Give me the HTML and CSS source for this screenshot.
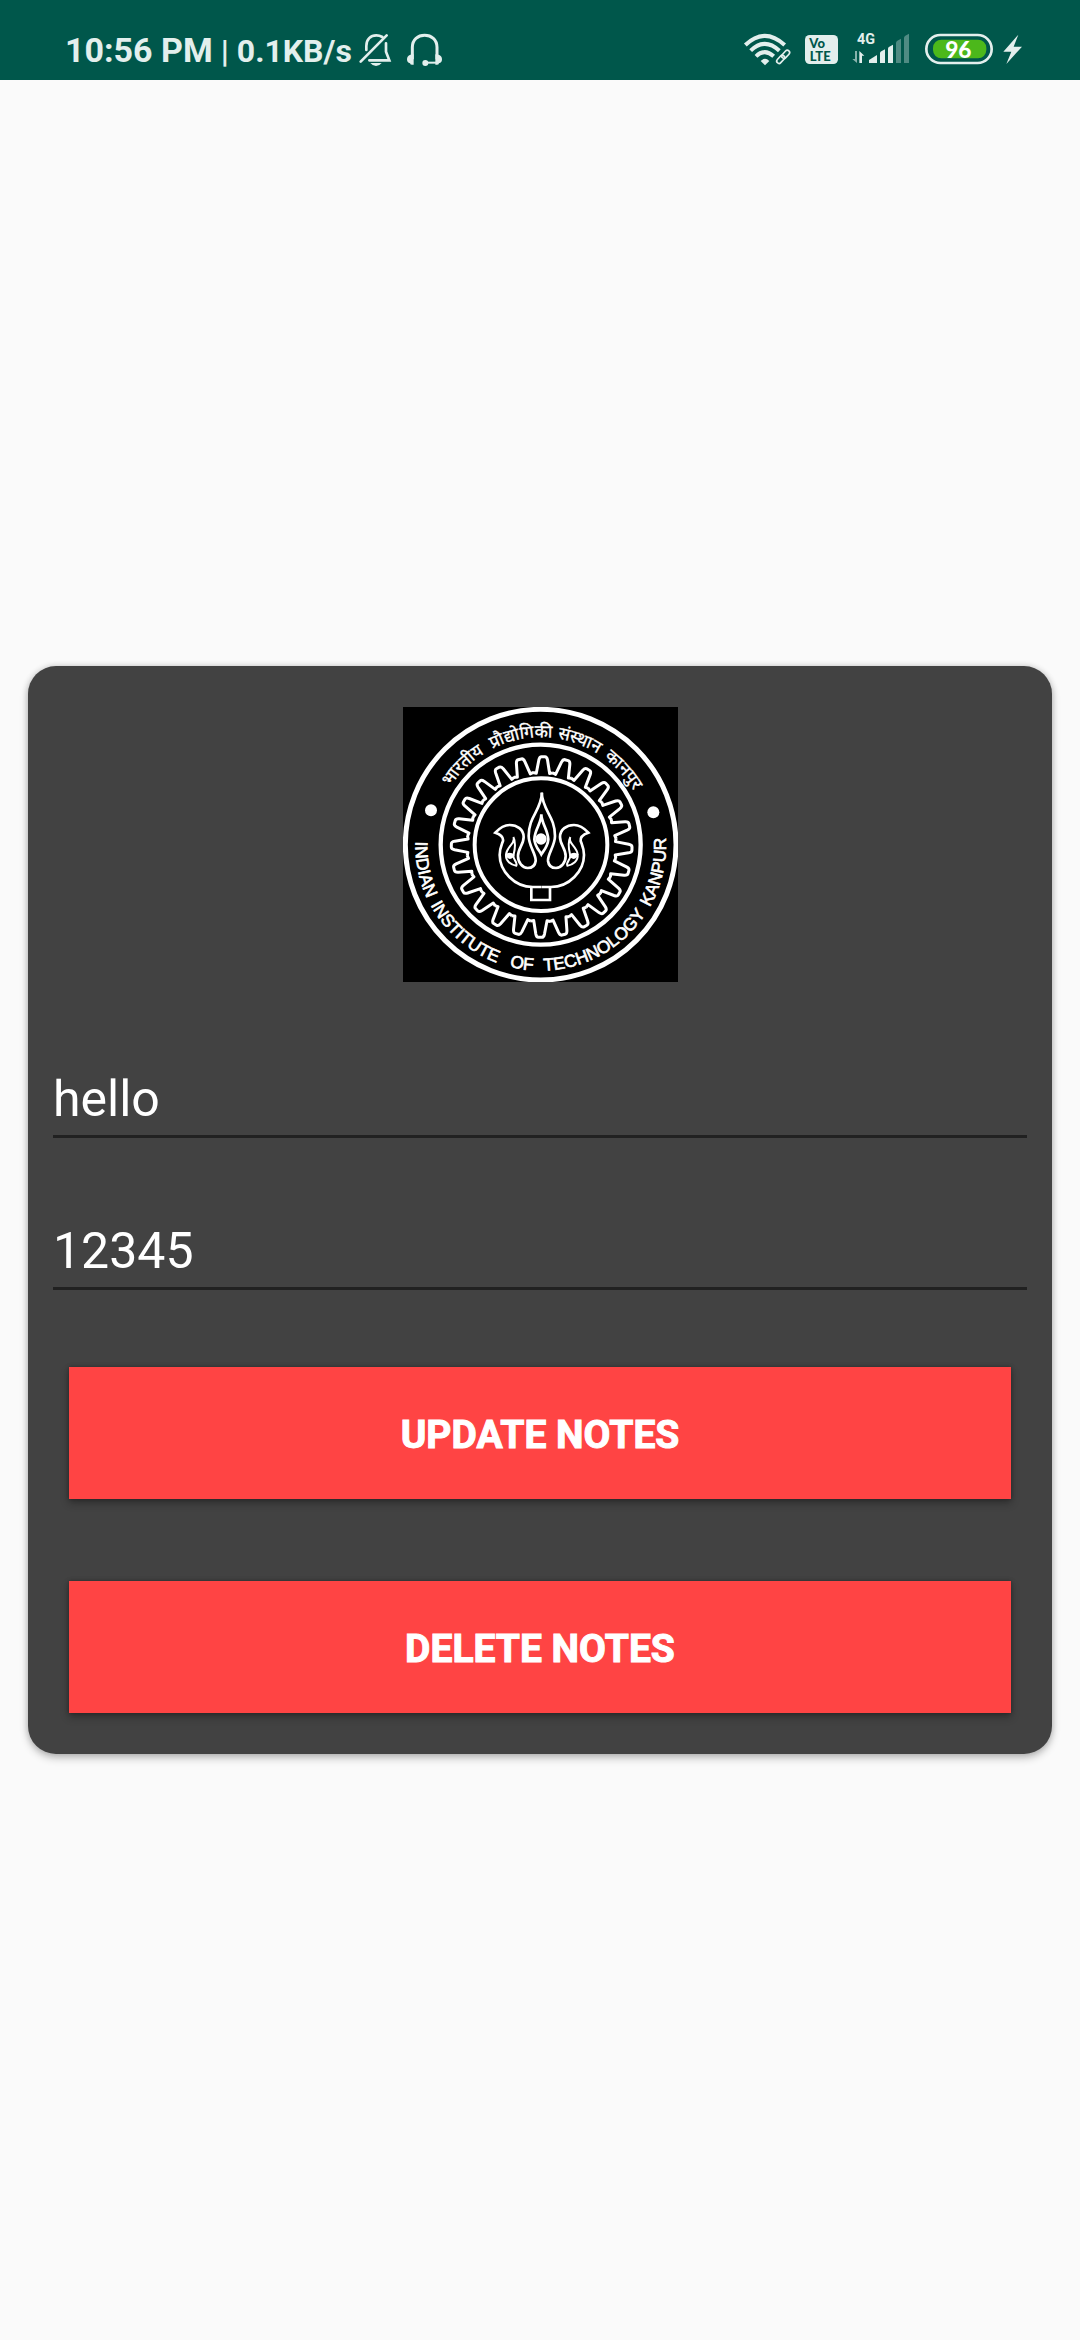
FILE: index.html
```html
<!DOCTYPE html>
<html lang="en">
<head>
<meta charset="utf-8">
<meta name="viewport" content="width=device-width, initial-scale=1">
<title>Update notes</title>
<link rel="stylesheet" href="styles.css">
</head>
<body>
<header class="status">
  <div class="status-left">
    <span class="clock">10:56 PM</span>
    <span class="speed">| 0.1KB/s</span>
    <svg class="icon-bell" viewBox="954 0 105 240" aria-hidden="true">
      <g fill="none" stroke="currentColor" stroke-width="8" stroke-linecap="round">
        <path d="M962 185 L1040 106"/>
        <path d="M979 150 V138 C979 118 992 106 1009 106 C1017 106 1022 108 1027 111"/>
        <path d="M1038 130 V155 L1048 181 H988"/>
      </g>
      <path fill="currentColor" d="M991 189 H1025 Q1018 198 1008 198 Q998 198 991 189Z"/>
    </svg>
    <svg class="icon-headset" viewBox="1098 0 111 240" aria-hidden="true">
      <path d="M1117 178 V142 C1117 118 1134 106 1154 106 C1174 106 1191 118 1191 142 V178" fill="none" stroke="currentColor" stroke-width="9"/>
      <path d="M1121 163 V194 Q1111 196 1110 190 Q1101 188 1101 178 Q1101 167 1111 164ZM1186 163 V194 Q1196 196 1197 190 Q1206 188 1206 178 Q1206 167 1196 164Z" fill="currentColor"/>
      <circle cx="1156" cy="189" r="9" fill="currentColor"/>
      <path d="M1156 188 H1194" stroke="currentColor" stroke-width="6"/>
    </svg>
  </div>
  <div class="status-right">
    <svg class="icon-wifi" viewBox="69 0 159 240" aria-hidden="true">
      <g fill="none" stroke="currentColor" stroke-width="12">
        <path d="M76 135 Q134 80 194 135"/>
        <path d="M92 152 Q134 111 178 152"/>
        <path d="M108 169 Q134 144 161 169"/>
      </g>
      <path fill="currentColor" d="M122 183 Q135 170 148 183 L135 196Z"/>
      <g fill="none" stroke="currentColor" stroke-width="5">
        <rect x="-14" y="-7" width="28" height="14" rx="7" transform="translate(197 163) rotate(-47)"/>
        <rect x="-14" y="-7" width="28" height="14" rx="7" transform="translate(182 178) rotate(-47)"/>
      </g>
    </svg>
    <svg class="icon-volte" viewBox="252 0 117 240" role="img" aria-label="VoLTE">
      <rect x="255" y="105" width="99" height="87" rx="14" fill="currentColor"/>
      <text class="volte" x="268" y="143">Vo</text>
      <text class="volte" x="269" y="182">LTE</text>
    </svg>
    <svg class="icon-signal" viewBox="393 0 192 240" role="img" aria-label="4G signal">
      <text class="network" x="411" y="131">4G</text>
      <g fill="currentColor">
        <path opacity=".6" d="M405 153 H411 V189 L397 177 H405Z"/>
        <path d="M418 189 V153 L433 167 H426 V189Z"/>
        <path d="M447 189 V180 L471 165 V189Z"/>
        <path d="M480 189 V160 Q480 156 484 154 L495 148 V189Z"/>
        <path d="M504 189 V146 Q504 142 508 140 L519 134 V189Z"/>
        <path opacity=".35" d="M528 189 V129 Q528 125 532 122 L543 116 V189ZM552 189 V114 Q552 110 556 107 L567 101 V189Z"/>
      </g>
    </svg>
    <svg class="icon-battery" viewBox="609 0 213 240" role="img" aria-label="Battery 96%">
      <rect x="619" y="105" width="196" height="84" rx="42" fill="none" stroke="currentColor" stroke-width="8"/>
      <rect x="639" y="119" width="160" height="56" rx="25" fill="#4cb81b"/>
      <text class="charge" x="715" y="173">96</text>
    </svg>
    <svg class="icon-bolt" viewBox="846 0 69 240" aria-hidden="true">
      <path fill="currentColor" d="M895 104 L850 155 H874 L859 192 L906 140 H881Z"/>
    </svg>
  </div>
</header>
<main class="screen">
  <form class="card">
    <svg class="logo" viewBox="36 33 825 825" role="img" aria-label="Indian Institute of Technology Kanpur">
      <defs>
        <path id="arc-top" d="M127 446 A322 322 0 0 1 771 446"/>
        <path id="arc-bottom" d="M79 381 A376 376 0 1 0 819 381"/>
        <path id="tooth" d="M-30 -223 L-20 -221 L-13 -261 Q-11 -271 -5 -271 L5 -271 Q11 -271 13 -261 L20 -221 L30 -223"/>
        <g id="quarter">
          <use href="#tooth"/>
          <use href="#tooth" transform="rotate(15)"/>
          <use href="#tooth" transform="rotate(30)"/>
          <use href="#tooth" transform="rotate(45)"/>
          <use href="#tooth" transform="rotate(60)"/>
          <use href="#tooth" transform="rotate(75)"/>
        </g>
        <g id="petal">
          <path d="M243 95 C240 150 203 165 203 225 C203 255 226 280 224 300 C222 316 210 321 200 321 C184 320 171 305 171 285 C171 262 188 252 188 228 C188 205 168 192 146 192 C128 192 115 202 103 215 C118 220 128 227 126 240 C122 252 116 262 116 282 C116 330 160 378 215 378 H242"/>
          <path stroke-width="6" d="M157 228 C166 246 138 255 135 280 C133 300 150 312 166 314 C171 304 157 298 157 284 C161 268 167 248 157 228Z"/>
          <path fill="#fff" stroke="none" d="M132 280 Q147 270 161 282 Q157 293 147 294 Q137 292 132 280Z"/>
        </g>
      </defs>
      <rect x="36" y="33" width="825" height="825"/>
      <g fill="none" stroke="#fff">
        <circle cx="449" cy="446" r="406" stroke-width="15"/>
        <circle cx="449" cy="446" r="300" stroke-width="13"/>
        <circle cx="450" cy="446" r="199" stroke-width="12"/>
        <g stroke-width="9" stroke-linejoin="round" transform="translate(452 453) rotate(1)">
          <use href="#quarter"/>
          <use href="#quarter" transform="rotate(90)"/>
          <use href="#quarter" transform="rotate(180)"/>
          <use href="#quarter" transform="rotate(270)"/>
        </g>
        <g stroke-width="8" transform="translate(210 195)">
          <use href="#petal"/>
          <use href="#petal" transform="translate(485 0) scale(-1 1)"/>
          <path d="M241 160 C241 188 221 205 220 235 C222 258 235 268 241 280 C248 268 260 258 262 235 C260 205 242 188 241 160Z"/>
          <circle cx="240" cy="234" r="13" fill="#fff"/>
          <path d="M211 378 V417 H267 V378"/>
        </g>
      </g>
      <g fill="#fff">
        <circle cx="120" cy="343" r="18"/>
        <circle cx="787" cy="349" r="18"/>
      </g>
      <g class="seal-hindi" lang="hi">
        <text><textPath href="#arc-top" startOffset="183">भारतीय</textPath></text>
        <text><textPath href="#arc-top" startOffset="355">प्रौद्योगिकी</textPath></text>
        <text><textPath href="#arc-top" startOffset="556">संस्थान</textPath></text>
        <text><textPath href="#arc-top" startOffset="708">कानपुर</textPath></text>
      </g>
      <g class="seal-english">
        <text><textPath href="#arc-bottom" startOffset="56">INDIAN</textPath></text>
        <text><textPath href="#arc-bottom" startOffset="254">INSTITUTE</textPath></text>
        <text><textPath href="#arc-bottom" startOffset="563">OF</textPath></text>
        <text><textPath href="#arc-bottom" startOffset="667">TECHNOLOGY</textPath></text>
        <text><textPath href="#arc-bottom" startOffset="1054">KANPUR</textPath></text>
      </g>
    </svg>
    <input class="field" type="text" aria-label="Title" value="hello">
    <input class="field" type="text" aria-label="Note" value="12345">
    <div class="actions">
      <button class="action" type="button">UPDATE NOTES</button>
      <button class="action" type="button">DELETE NOTES</button>
    </div>
  </form>
</main>
</body>
</html>
```
FILE: styles.css
```css
* {
  box-sizing: border-box;
}

body {
  margin: 0;
  min-height: 100vh;
  display: flex;
  flex-direction: column;
  background: #fafafa;
  font-family: Roboto, "Noto Sans", sans-serif;
}

.status {
  display: flex;
  justify-content: space-between;
  height: 80px;
  padding: 0 55px 0 65px;
  background: #00574b;
  color: #e3efed;
  font-weight: 700;
  line-height: 40px;
}

.status-left,
.status-right {
  display: flex;
}

.status-left {
  align-items: baseline;
}

.status-right {
  gap: 8px;
}

.status svg {
  display: block;
  height: 80px;
}

.clock {
  padding-top: 30px;
  font-size: 34px;
}

.speed {
  margin-left: 8px;
  font-size: 32px;
}

.icon-bell {
  width: 35px;
  margin-left: 6px;
  align-self: flex-start;
}

.icon-headset {
  width: 37px;
  margin-left: 13px;
  align-self: flex-start;
}

.icon-wifi {
  width: 53px;
}

.icon-volte {
  width: 39px;
}

.icon-signal {
  width: 64px;
}

.icon-battery {
  width: 71px;
}

.icon-bolt {
  width: 23px;
}

.volte {
  fill: #00574b;
  font: 900 39px Lato, sans-serif;
}

.network {
  fill: currentColor;
  font: 700 43px Roboto, sans-serif;
}

.charge {
  fill: #fff;
  font: 900 68px Lato, sans-serif;
  text-anchor: middle;
}

.screen {
  flex: 1;
  display: flex;
  flex-direction: column;
  justify-content: center;
  padding: 0 28px;
}

.card {
  display: flex;
  flex-direction: column;
  padding: 41px 25px;
  border-radius: 28px;
  background: #424242;
  box-shadow: 0 4px 8px rgba(0, 0, 0, .24), 0 0 6px rgba(0, 0, 0, .16);
}

.logo {
  display: block;
  width: 275px;
  height: 275px;
  margin: 0 auto 4px;
}

.seal-hindi {
  fill: #fff;
  stroke: #fff;
  font: 400 52px "Noto Sans Devanagari", "Noto Sans", sans-serif;
}

.seal-english {
  fill: #fff;
  stroke: #fff;
  stroke-width: 2px;
  font: 400 52px "Liberation Sans", Arial, sans-serif;
}

.field {
  width: 100%;
  height: 96px;
  margin: 56px 0 0;
  padding: 20px 0 0;
  border: 0;
  border-bottom: 3px solid #212121;
  border-radius: 0;
  outline: 0;
  background: transparent;
  color: #fff;
  font: 400 50px Roboto, sans-serif;
}

.actions {
  display: flex;
  flex-direction: column;
  gap: 82px;
  padding: 77px 16px 0;
}

.action {
  height: 132px;
  padding: 4px 0 0;
  border: 0;
  background: #ff4444;
  box-shadow: 0 4px 8px rgba(0, 0, 0, .3), 0 0 4px rgba(0, 0, 0, .3);
  color: #fff;
  font: 700 39px Roboto, sans-serif;
  -webkit-text-stroke: 1px #fff;
}
```
